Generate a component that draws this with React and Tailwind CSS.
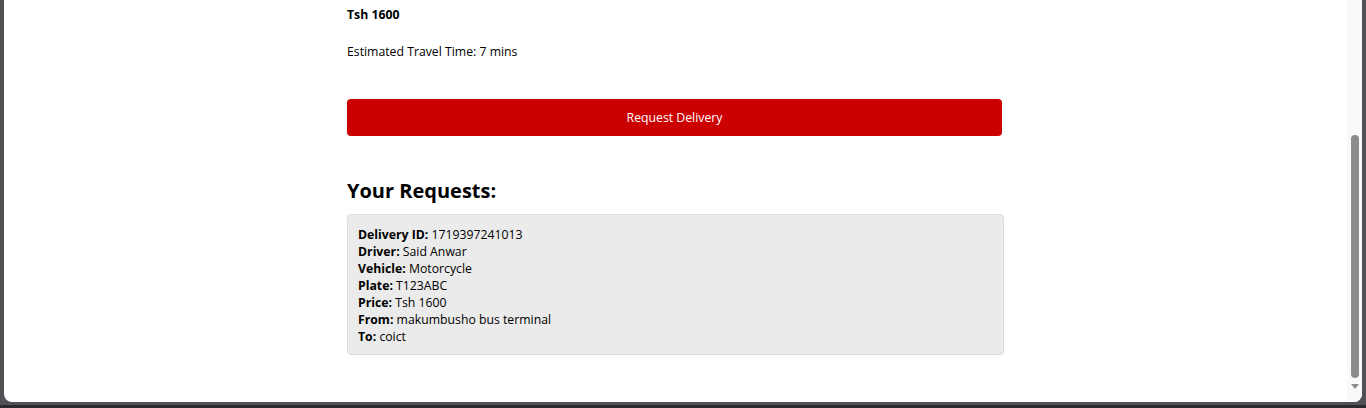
import React from "react";

const request = {
  id: "1719397241013",
  driver: "Said Anwar",
  vehicle: "Motorcycle",
  plate: "T123ABC",
  price: "Tsh 1600",
  from: "makumbusho bus terminal",
  to: "coict",
};

const Row = ({ label, value }) => (
  <div>
    <span className="font-bold">{label}:</span> {value}
  </div>
);

const App = () => {
  return (
    <div className="h-[408px] bg-[#505055] flex flex-col overflow-hidden font-['Open_Sans',sans-serif] text-black">
      <div className="flex-1 mx-[4px] bg-white rounded-b-[8px] flex overflow-hidden">
        <div className="flex-1">
          <div className="w-[657px] mx-auto pt-[5px]">
            <p className="text-[12.25px] leading-[20px] font-bold">Tsh 1600</p>
            <p className="text-[12.25px] leading-[20px] mt-[17px]">Estimated Travel Time: 7 mins</p>
            <button className="mt-[37px] w-[655px] h-[37px] pt-[2px] bg-[#cc0000] text-white text-[12.25px] rounded-[4px]">
              Request Delivery
            </button>
            <h2 className="mt-[41px] text-[20px] leading-[28px] font-bold">Your Requests:</h2>
            <div className="mt-[9px] bg-[#ebebeb] border border-[#dcdcdc] rounded-[4px] px-[10px] pt-[11px] pb-[9px] text-[12.25px] leading-[17px]">
              <Row label="Delivery ID" value={request.id} />
              <Row label="Driver" value={request.driver} />
              <Row label="Vehicle" value={request.vehicle} />
              <Row label="Plate" value={request.plate} />
              <Row label="Price" value={request.price} />
              <Row label="From" value={request.from} />
              <Row label="To" value={request.to} />
            </div>
          </div>
        </div>
        {/* scrollbar */}
        <div className="w-[15px] bg-[#f9f9f9] flex flex-col items-center pt-[135px]">
          <div className="w-[8px] h-[243px] bg-[#8c8c8c] rounded-full"></div>
          <div className="mt-[6px] w-0 h-0 border-l-[4px] border-r-[4px] border-t-[5px] border-l-transparent border-r-transparent border-t-[#8c8c8c]"></div>
        </div>
      </div>
      <div className="h-[6px] flex flex-col">
        <div className="h-[3px]"></div>
        <div className="h-[3px] bg-[#2b2b2e]"></div>
      </div>
    </div>
  );
};

export default App;
